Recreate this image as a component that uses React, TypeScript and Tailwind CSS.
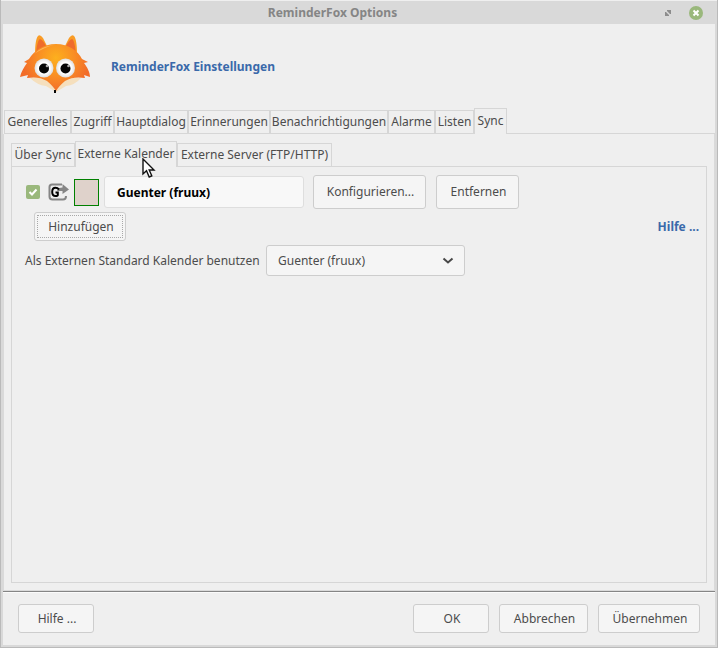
import type { ButtonHTMLAttributes } from "react";

const buttonBase =
  "shrink-0 rounded-[3px] border border-[#cdcdcd] bg-[#f5f5f5] text-center text-[#4c4c4c] whitespace-nowrap";

function PushButton({ className = "", ...rest }: ButtonHTMLAttributes<HTMLButtonElement>) {
  return <button type="button" className={`${buttonBase} ${className}`} {...rest} />;
}

type Tab = { label: string; width: string };

const optionTabs: Tab[] = [
  { label: "Generelles", width: "w-[67px]" },
  { label: "Zugriff", width: "w-[43px]" },
  { label: "Hauptdialog", width: "w-[74px]" },
  { label: "Erinnerungen", width: "w-[82px]" },
  { label: "Benachrichtigungen", width: "w-[118px]" },
  { label: "Alarme", width: "w-[47px]" },
  { label: "Listen", width: "w-[39px]" },
  { label: "Sync", width: "w-[33px]" },
];

const syncTabs: Tab[] = [
  { label: "Über Sync", width: "w-[64px]" },
  { label: "Externe Kalender", width: "w-[102px]" },
  { label: "Externe Server (FTP/HTTP)", width: "w-[155px]" },
];

function TabStrip({ tabs, selected, name }: { tabs: Tab[]; selected: string; name: string }) {
  return (
    <div role="tablist" aria-label={name} className="flex items-end">
      {tabs.map(({ label, width }) => {
        const active = label === selected;
        return (
          <button
            key={label}
            type="button"
            role="tab"
            aria-selected={active}
            className={`${width} flex shrink-0 items-center justify-center border-[#d6d6d6] whitespace-nowrap ${
              active ? "h-[26px] border-x border-t pb-[2px]" : "h-6 border"
            }`}
          >
            {label}
          </button>
        );
      })}
      <div className="h-6 flex-1 border-b border-[#d6d6d6]" />
    </div>
  );
}

function FoxLogo() {
  return (
    <svg width="72" height="62" viewBox="0 0 72 62" aria-label="ReminderFox" role="img">
      <defs>
        <radialGradient id="fur" cx="36" cy="23" r="34" gradientUnits="userSpaceOnUse">
          <stop offset="0" stopColor="#fdb01e" />
          <stop offset="0.55" stopColor="#f98d24" />
          <stop offset="1" stopColor="#f26c29" />
        </radialGradient>
        <radialGradient id="eye">
          <stop offset="0.6" stopColor="#ffffff" />
          <stop offset="1" stopColor="#dedede" />
        </radialGradient>
      </defs>
      <path d="M15 19C15 10 16 3 18 1Q20-1 23 3L27 11ZM57 19C57 10 56 3 54 1Q52-1 49 3L45 11Z" fill="#f99c25" />
      <path d="M16 18C17 10 18 5 20 4Q23 5 26 11ZM56 18C55 10 54 5 52 4Q49 5 46 11Z" fill="#ef6c2c" />
      <path d="M10 43Q17 50 26 51L36 57L46 51Q55 50 61 43Z" fill="#f5dfbd" />
      <path
        d="M36 9C23 9 14 16 9 24L4 27L7 28C4 32 1 37 0 42L8 40L7 43C13 42 21 42 27 46C31 49 34 53 36 56C38 53 41 49 45 46C51 42 59 42 65 43L64 40L70 42C70 37 67 32 64 28L68 27L62 24C58 16 49 9 36 9Z"
        fill="url(#fur)"
      />
      <path d="M14 19Q22 11 34 10Q25 12 14 19Z" fill="#fcb65b" />
      <circle cx="24" cy="33" r="9.5" fill="url(#eye)" />
      <circle cx="45.5" cy="33" r="9.5" fill="url(#eye)" />
      <circle cx="24" cy="33.500" r="5" fill="#050505" />
      <circle cx="45.500" cy="33.500" r="5" fill="#050505" />
      <circle cx="27" cy="31" r="1.3" fill="#aaa" />
      <circle cx="48.5" cy="31" r="1.3" fill="#aaa" />
      <path d="M34 55h2v3h-2Z" fill="#080808" />
    </svg>
  );
}

function ExportIcon() {
  return (
    <svg width="22" height="18" viewBox="0 0 22 18" aria-hidden="true">
      <path d="M14 1.500H4Q1.500 1.500 1.500 4V13.500Q1.500 16.500 4.500 16.500H15Q18 16.500 18 13" fill="none" stroke="#858585" strokeWidth="2" />
      <path d="M9 8Q10 4.500 14.500 4.500V1L21 6.500L14.500 11V8Z" fill="#858585" />
      <path d="M11 6.500Q9.500 4.800 7.500 4.800Q4.200 4.800 4.200 9Q4.200 13 7.500 13Q9.800 13 9.800 12V9.500H7.500" fill="none" stroke="#000" strokeWidth="2" />
    </svg>
  );
}

function Pointer() {
  return (
    <svg width="14" height="21" viewBox="0 0 14 21" className="pointer-events-none absolute top-[158px] left-[141px]" aria-hidden="true">
      <path d="M1 1V16L4.500 12.800L7.200 19L9.800 17.800L7.200 12H12Z" fill="#fff" stroke="#111" strokeWidth="1.400" />
    </svg>
  );
}

export default function App() {
  return (
    <div className="relative flex min-h-screen flex-col border-x border-b border-[#bababa] bg-[#d9d9d9] font-['Noto_Sans',sans-serif] text-[12px] leading-4 text-[#4c4c4c]">
      <header className="flex h-6 items-center border-t border-[#efefef] pr-[14px]">
        <h1 className="flex-1 text-center font-bold text-[#858585]">ReminderFox Options</h1>
        <button type="button" aria-label="Maximieren" className="mr-[17px]">
          <svg width="8" height="8" viewBox="0 0 8 8" fill="#8c8c8c">
            <path d="M3 1H7V5L6 5L3 2ZM1 3L2 3L5 6V7H1Z" />
          </svg>
        </button>
        <button type="button" aria-label="Schließen">
          <svg width="14" height="14" viewBox="0 0 14 14">
            <circle cx="7" cy="7" r="7" fill="#9ab87c" />
            <path d="M4.500 4.500L9.500 9.500M9.500 4.500L4.500 9.500" stroke="#fff" strokeWidth="2" />
          </svg>
        </button>
      </header>

      <main className="mx-[2px] mb-[2px] flex flex-1 flex-col bg-[#efefef]">
        <div className="flex h-[84px] items-center gap-[19px] pl-[17px]">
          <FoxLogo />
          <h2 className="pt-[2px] font-bold text-[#3a69aa]">ReminderFox Einstellungen</h2>
        </div>

        <section className="flex flex-1 flex-col">
          <div className="pl-px">
            <TabStrip name="Optionen" tabs={optionTabs} selected="Sync" />
          </div>

          <div className="flex flex-1 flex-col border-x border-b border-[#dadada] p-[7px]">
            <TabStrip name="Sync" tabs={syncTabs} selected="Externe Kalender" />

            <div className="flex-1 border-x border-b border-[#d6d6d6] pt-2 pr-[7px] pl-[13px]">
              <div className="flex items-center">
                <label className="relative mr-2 ml-px flex size-[14px]">
                  <input type="checkbox" defaultChecked aria-label="Guenter (fruux) aktiv" className="size-[14px] appearance-none rounded-[2px] bg-[#9ab87c]" />
                  <svg width="14" height="14" viewBox="0 0 14 14" className="pointer-events-none absolute inset-0" aria-hidden="true">
                    <path d="M3.500 7L6 9.500L10.500 4.500" fill="none" stroke="#fff" strokeWidth="2" />
                  </svg>
                </label>
                <ExportIcon />
                <button type="button" aria-label="Farbe" className="mr-[5px] ml-1 h-[27px] w-[25px] border border-[#008000] bg-[#dfd2cb]" />
                <input
                  type="text"
                  aria-label="Name"
                  defaultValue="Guenter (fruux)"
                  className="h-8 w-[200px] rounded-[3px] border border-[#dedede] bg-[#f8f8f8] px-3 font-bold text-black"
                />
                <PushButton className="ml-[9px] h-[34px] w-[113px] pl-[2px]">Konfigurieren...</PushButton>
                <PushButton className="ml-[10px] h-[34px] w-[83px] pl-[2px]">Entfernen</PushButton>
              </div>

              <div className="mt-[3px] flex items-center justify-between">
                <PushButton className="ml-[9px] h-[29px] w-[92px] p-[2px]">
                  <span className="flex h-full items-center justify-center border border-dotted border-[#a8a8a8] pl-[2px]">Hinzufügen</span>
                </PushButton>
                <a href="#hilfe" className="font-bold text-[#3a69aa]">
                  Hilfe ...
                </a>
              </div>

              <div className="mt-1 flex items-center gap-[9px]">
                <label htmlFor="standard" className="w-[232px] whitespace-nowrap">
                  Als Externen Standard Kalender benutzen
                </label>
                <div className="relative">
                  <select id="standard" className="h-[31px] w-[199px] appearance-none rounded-[3px] border border-[#cdcdcd] bg-[#f5f5f5] px-[11px]">
                    <option>Guenter (fruux)</option>
                  </select>
                  <svg width="12" height="8" viewBox="0 0 12 8" className="pointer-events-none absolute top-3 right-[11px]" aria-hidden="true">
                    <path d="M1.500 1.500L6 5.500L10.500 1.500" fill="none" stroke="#484848" strokeWidth="2" />
                  </svg>
                </div>
              </div>
            </div>
          </div>
        </section>

        <footer className="border-t border-[#858585]">
          <div className="flex border-t border-[#fbfbfb] px-[15px] pt-[11px] pb-3">
            <PushButton className="mr-auto h-[29px] w-[76px] pl-[2px]">Hilfe ...</PushButton>
            <div className="flex gap-[10px]">
              <PushButton className="h-[29px] w-[76px] pl-[2px]">OK</PushButton>
              <PushButton className="h-[29px] w-[89px] pl-[2px]">Abbrechen</PushButton>
              <PushButton className="h-[29px] w-[102px] pl-[2px]">Übernehmen</PushButton>
            </div>
          </div>
        </footer>
      </main>
      <Pointer />
    </div>
  );
}
